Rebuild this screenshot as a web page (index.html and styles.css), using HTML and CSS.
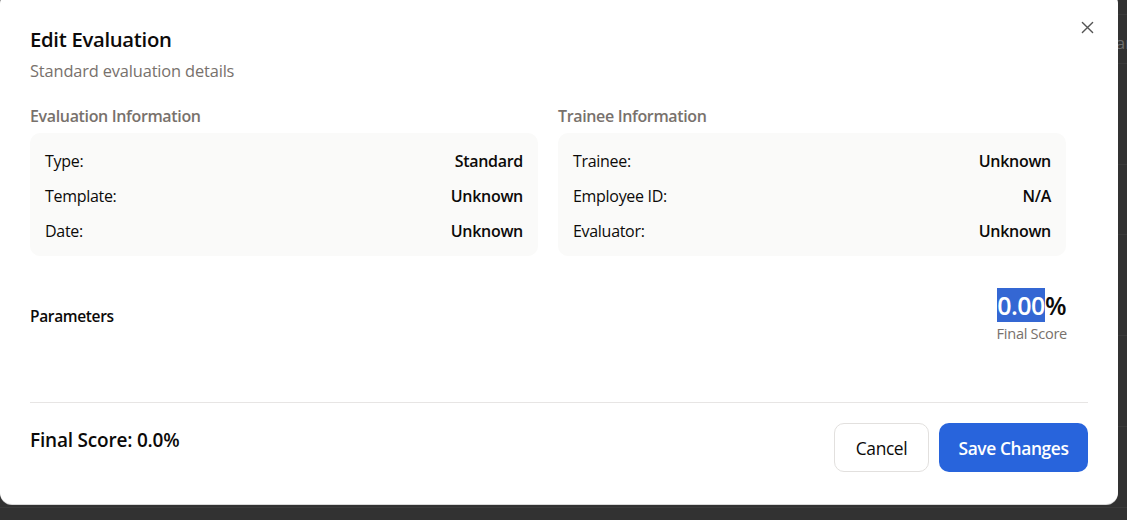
FILE: index.html
```html
<!DOCTYPE html>
<html>
<head>
<meta charset="utf-8">
<link rel="stylesheet" href="styles.css">
</head>
<body>
<div class="behind">
  <div class="brow r1"></div>
  <div class="brow r2"><span class="btext">Search</span></div>
  <div class="brow r3"></div>
  <div class="brow r4"></div>
  <div class="brow r5"></div>
  <div class="brow r6"></div>
  <div class="brow r7"></div>
</div>
<div class="dialog">
  <button class="close" aria-label="Close">
    <svg width="14" height="14" viewBox="0 0 14 14"><path d="M1.5 1.5 L12.5 12.5 M12.5 1.5 L1.5 12.5" stroke="#555" stroke-width="1.5" stroke-linecap="round" fill="none"/></svg>
  </button>
  <div class="head">
    <h2 class="title">Edit Evaluation</h2>
    <p class="subtitle">Standard evaluation details</p>
  </div>
  <div class="info-grid">
    <section class="info">
      <h3 class="info-title">Evaluation Information</h3>
      <div class="card">
        <div class="row"><span>Type:</span><b>Standard</b></div>
        <div class="row"><span>Template:</span><b>Unknown</b></div>
        <div class="row"><span>Date:</span><b>Unknown</b></div>
      </div>
    </section>
    <section class="info">
      <h3 class="info-title">Trainee Information</h3>
      <div class="card">
        <div class="row"><span>Trainee:</span><b>Unknown</b></div>
        <div class="row"><span>Employee ID:</span><b>N/A</b></div>
        <div class="row"><span>Evaluator:</span><b>Unknown</b></div>
      </div>
    </section>
  </div>
  <div class="params">
    <h3 class="params-title">Parameters</h3>
    <div class="score">
      <div class="score-value"><span class="sel">0.00</span>%</div>
      <div class="score-label">Final Score</div>
    </div>
  </div>
  <div class="footer">
    <div class="final">Final Score: 0.0%</div>
    <div class="actions">
      <button class="btn cancel">Cancel</button>
      <button class="btn save">Save Changes</button>
    </div>
  </div>
</div>
</body>
</html>
```
FILE: styles.css
```css
* { box-sizing: border-box; }
html, body { margin: 0; padding: 0; }
body {
  background: #323232;
  font-family: "Open Sans", "Noto Sans", sans-serif;
  color: #0c0a09;
  width: 1127px;
  height: 520px;
  overflow: hidden;
  position: relative;
}
.behind {
  position: absolute;
  left: 0; top: 0; right: 0; bottom: 0;
  display: flex;
  flex-direction: column;
}
.brow { border-bottom: 1px solid #3b3b3b; flex: none; position: relative; }
.r1 { height: 15px; }
.r2 { height: 49px; }
.r3 { height: 101px; }
.r4 { height: 70px; }
.r5 { height: 101px; }
.r6 { height: 91px; }
.r7 { height: 81px; }
.btext {
  position: absolute;
  left: 1097px; top: 16px;
  font-size: 17px;
  color: #6e6e6e;
}
.dialog {
  position: relative;
  margin-top: -8px;
  width: 1118px;
  height: 512px;
  background: #fff;
  border-radius: 12px;
  box-shadow: 0 1px 0 #d8d8d8;
  padding: 33px 30px 0 30px;
  display: flex;
  flex-direction: column;
}
.close {
  position: absolute;
  right: 23px; top: 27px;
  width: 16px; height: 16px;
  padding: 0; border: 0; background: none;
  display: flex; align-items: center; justify-content: center;
}
.close svg { width: 13px; height: 13px; }
.title {
  margin: 0;
  font-size: 20.3px;
  font-weight: 600;
  line-height: 28px;
  letter-spacing: -0.3px;
}
.subtitle {
  margin: 7px 0 0;
  font-size: 16.4px;
  line-height: 22px;
  color: #78716c;
  letter-spacing: -0.15px;
}
.info-grid {
  display: grid;
  grid-template-columns: 508px 508px;
  column-gap: 20px;
  margin-top: 23px;
}
.info-title {
  margin: 0;
  font-size: 16px;
  font-weight: 600;
  line-height: 22px;
  color: #78716c;
  letter-spacing: -0.35px;
}
.card {
  margin-top: 6px;
  background: #fafaf9;
  border-radius: 10px;
  padding: 16px 15px 13px;
  display: flex;
  flex-direction: column;
  gap: 11px;
}
.row {
  display: flex;
  justify-content: space-between;
  font-size: 16px;
  line-height: 24px;
  letter-spacing: -0.3px;
}
.row b { font-weight: 600; }
.params {
  display: flex;
  justify-content: space-between;
  align-items: flex-start;
  width: 1036px;
  margin-top: 32px;
  height: 114px;
}
.params-title {
  margin: 17px 0 0;
  font-size: 15.5px;
  font-weight: 600;
  line-height: 22px;
  letter-spacing: -0.35px;
}
.score {
  display: flex;
  flex-direction: column;
  align-items: flex-end;
}
.score-value {
  font-size: 25px;
  font-weight: 600;
  line-height: 34px;
  height: 34px;
  letter-spacing: -0.5px;
}
.sel {
  display: inline-block;
  line-height: 34px;
  height: 34px;
  background: #3467d3;
  color: #fff;
}
.score-label {
  margin-top: 1px;
  font-size: 14.6px;
  line-height: 20px;
  color: #78716c;
  letter-spacing: -0.3px;
  margin-right: -1px;
}
.footer {
  border-top: 1px solid #e7e5e4;
  display: flex;
  justify-content: space-between;
  align-items: flex-start;
  padding-top: 20px;
}
.final {
  margin-top: 4px;
  font-size: 19px;
  font-weight: 600;
  line-height: 26px;
  letter-spacing: -0.2px;
}
.actions { display: flex; gap: 10px; }
.btn {
  height: 49px;
  border-radius: 10px;
  font-family: inherit;
  font-size: 17.4px;
  font-weight: 500;
  letter-spacing: -0.4px;
  padding: 0;
}
.cancel {
  width: 95px;
  background: #fff;
  border: 1px solid #e2e0de;
  color: #0c0a09;
}
.save {
  width: 149px;
  background: #2864dc;
  border: 0;
  color: #fff;
  font-weight: 600;
}
```
